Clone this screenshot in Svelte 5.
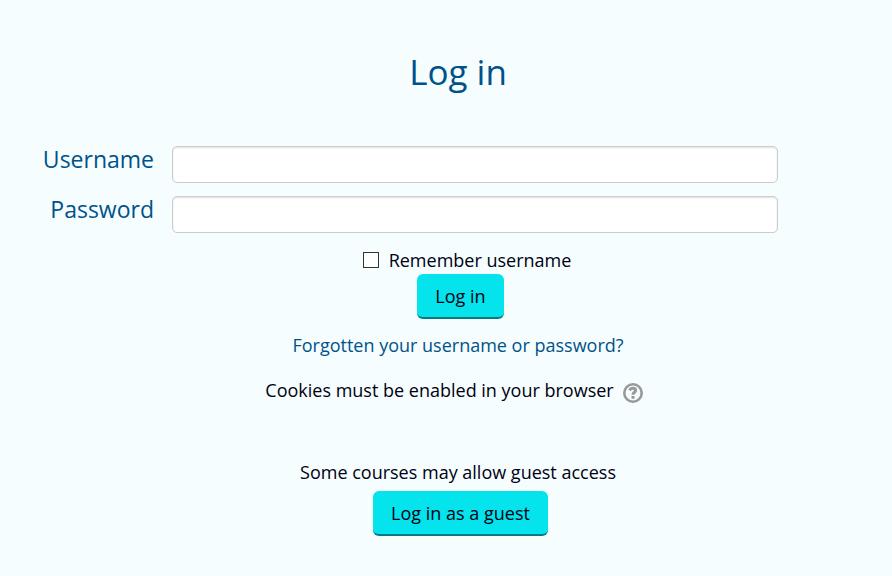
<script lang="ts">
  let username = $state('');
  let password = $state('');
  let remember = $state(false);
</script>

<main class="login-page">
  <h1>Log in</h1>

  <form class="login-form" onsubmit={(e) => e.preventDefault()}>
    <div class="field">
      <label for="username">Username</label>
      <input id="username" type="text" autocomplete="username" bind:value={username} />
    </div>
    <div class="field">
      <label for="password">Password</label>
      <input
        id="password"
        type="password"
        autocomplete="current-password"
        bind:value={password}
      />
    </div>

    <div class="remember">
      <input id="remember" type="checkbox" bind:checked={remember} />
      <label for="remember">Remember username</label>
    </div>
    <button class="btn" type="submit">Log in</button>
  </form>

  <a class="forgot" href="#forgot">Forgotten your username or password?</a>

  <p class="cookies">
    Cookies must be enabled in your browser
    <button class="help" type="button" aria-label="Help with cookies">
      <svg viewBox="0 0 20 20" width="20" height="20" aria-hidden="true">
        <circle cx="10" cy="10" r="8.7" fill="none" stroke="#999" stroke-width="2.6" />
        <path
          d="M6.6 7.4 C7.4 5.8 8.6 5.3 10 5.3 C11.8 5.3 12.6 6.3 12.6 7.5 C12.6 9.4 10 9.2 10 11.8"
          fill="none"
          stroke="#999"
          stroke-width="3"
        />
        <rect x="8.5" y="13" width="3" height="2.8" fill="#999" />
      </svg>
    </button>
  </p>

  <section class="guest">
    <p>Some courses may allow guest access</p>
    <button class="btn" type="button">Log in as a guest</button>
  </section>
</main>

<style>
  :global(body) {
    background: #f5fdff;
  }

  .login-page {
    display: flex;
    flex-direction: column;
    align-items: center;
    padding: 48px 0 32px 24px;
    color: #000011;
    font-family: "Open Sans", "Noto Sans", sans-serif;
    font-size: 18px;
    line-height: 26px;
  }

  h1 {
    margin: 0 0 50px;
    color: #00528a;
    font-size: 35px;
    font-weight: 400;
    line-height: 48px;
  }

  .login-form {
    display: flex;
    flex-direction: column;
    align-items: center;
    width: 100%;
  }

  .field {
    display: flex;
    align-self: stretch;
    gap: 18px;
    margin: 0 114px 13px 0;
  }

  .field label {
    width: 130px;
    color: #00528a;
    font-size: 23px;
    text-align: right;
  }

  .field input {
    box-sizing: border-box;
    flex: 1;
    min-width: 0;
    height: 37px;
    padding: 4px 8px;
    border: 1px solid #ccc;
    border-radius: 5px;
    background: #fff;
    box-shadow: inset 0 1px 2px rgba(0, 0, 0, 0.12);
    font: inherit;
  }

  .remember {
    display: flex;
    align-items: center;
    gap: 10px;
    margin-left: 18px;
    line-height: 28px;
  }

  .remember input {
    appearance: none;
    box-sizing: border-box;
    width: 16px;
    height: 16px;
    margin: 0;
    border: 1px solid #333;
    background: #fff;
  }

  .remember input:checked {
    background: #00528a;
    box-shadow: inset 0 0 0 2px #fff;
  }

  .btn {
    box-sizing: border-box;
    height: 45px;
    margin-left: 5px;
    padding: 0 18px;
    border: 0;
    border-bottom: 2px solid #047a82;
    border-radius: 6px;
    background: #05e3ec;
    color: #000011;
    font: inherit;
    cursor: pointer;
  }

  .btn:hover {
    background: #00d2dc;
  }

  .forgot {
    margin-top: 13px;
    color: #00528a;
    text-decoration: none;
  }

  .cookies {
    display: flex;
    align-items: center;
    gap: 9px;
    margin: 19px 8px 0 0;
  }

  .help {
    display: flex;
    padding: 5px 0 0;
    border: 0;
    background: none;
    cursor: pointer;
  }

  .guest {
    display: flex;
    flex-direction: column;
    align-items: center;
    gap: 6px;
    margin-top: 56px;
  }

  .guest p {
    margin: 0;
  }
</style>
